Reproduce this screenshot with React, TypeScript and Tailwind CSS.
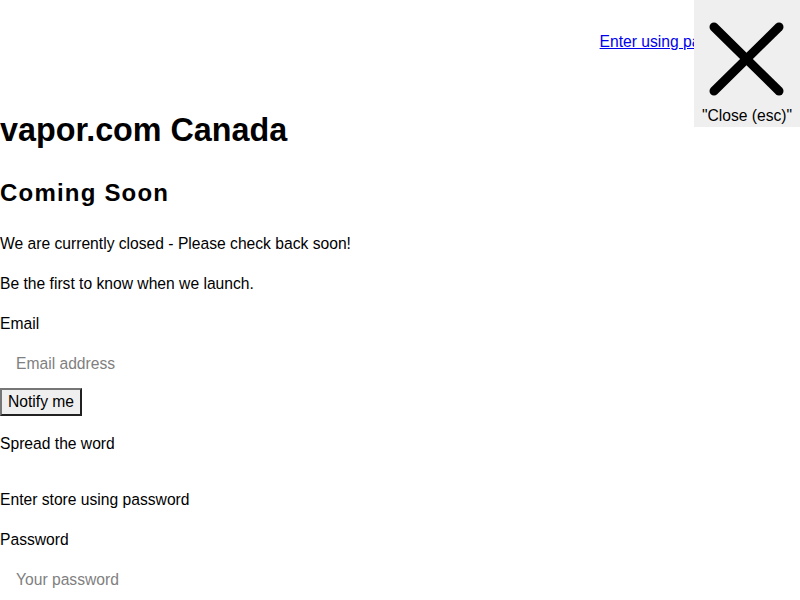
export default function App() {
  return (
    <div className="relative min-h-[600px] bg-white font-['Liberation_Sans',Arial,sans-serif] text-[15.65px] text-black">
      <div className="flex h-[84px] items-center justify-end pr-[50px]">
        <a href="#" className="text-[#0000ee] underline leading-5">
          Enter using password
        </a>
      </div>

      <h1 className="mt-[28px] text-[32.3px] font-bold leading-[36px]">vapor.com Canada</h1>
      <h2 className="mt-[31px] text-[24px] font-bold leading-[28px] tracking-[1.2px]">Coming Soon</h2>

      <p className="mt-[25px] leading-6">We are currently closed - Please check back soon!</p>
      <p className="mt-4 leading-6">Be the first to know when we launch.</p>

      <form className="mt-4" onSubmit={(e) => e.preventDefault()}>
        <label className="block leading-6">Email</label>
        <input
          type="email"
          placeholder="Email address"
          className="mt-2 mb-1 block h-[40px] w-[240px] px-4 text-[15.65px] outline-none placeholder:text-[#808080]"
        />
        <button
          type="submit"
          className="block h-[28px] border-2 border-[#767676] bg-[#efefef] px-[6px] text-[15.65px] leading-5"
          style={{ borderStyle: "outset" }}
        >
          Notify me
        </button>
      </form>

      <p className="mt-4 leading-6">Spread the word</p>

      <p className="mt-8 leading-6">Enter store using password</p>
      <label className="mt-4 block leading-6">Password</label>
      <input
        type="password"
        placeholder="Your password"
        className="mt-2 block h-[40px] w-[240px] px-4 text-[15.65px] outline-none placeholder:text-[#808080]"
      />

      <button
        type="button"
        className="absolute right-0 top-0 flex h-[127px] w-[106px] flex-col items-center bg-[#efefef]"
      >
        <svg width="106" height="104" viewBox="0 0 106 104" className="block">
          <line x1="20" y1="27" x2="85" y2="91" stroke="black" strokeWidth="9" strokeLinecap="round" />
          <line x1="85" y1="27" x2="20" y2="91" stroke="black" strokeWidth="9" strokeLinecap="round" />
        </svg>
        <span className="mt-[2px] leading-5">"Close (esc)"</span>
      </button>
    </div>
  );
}
